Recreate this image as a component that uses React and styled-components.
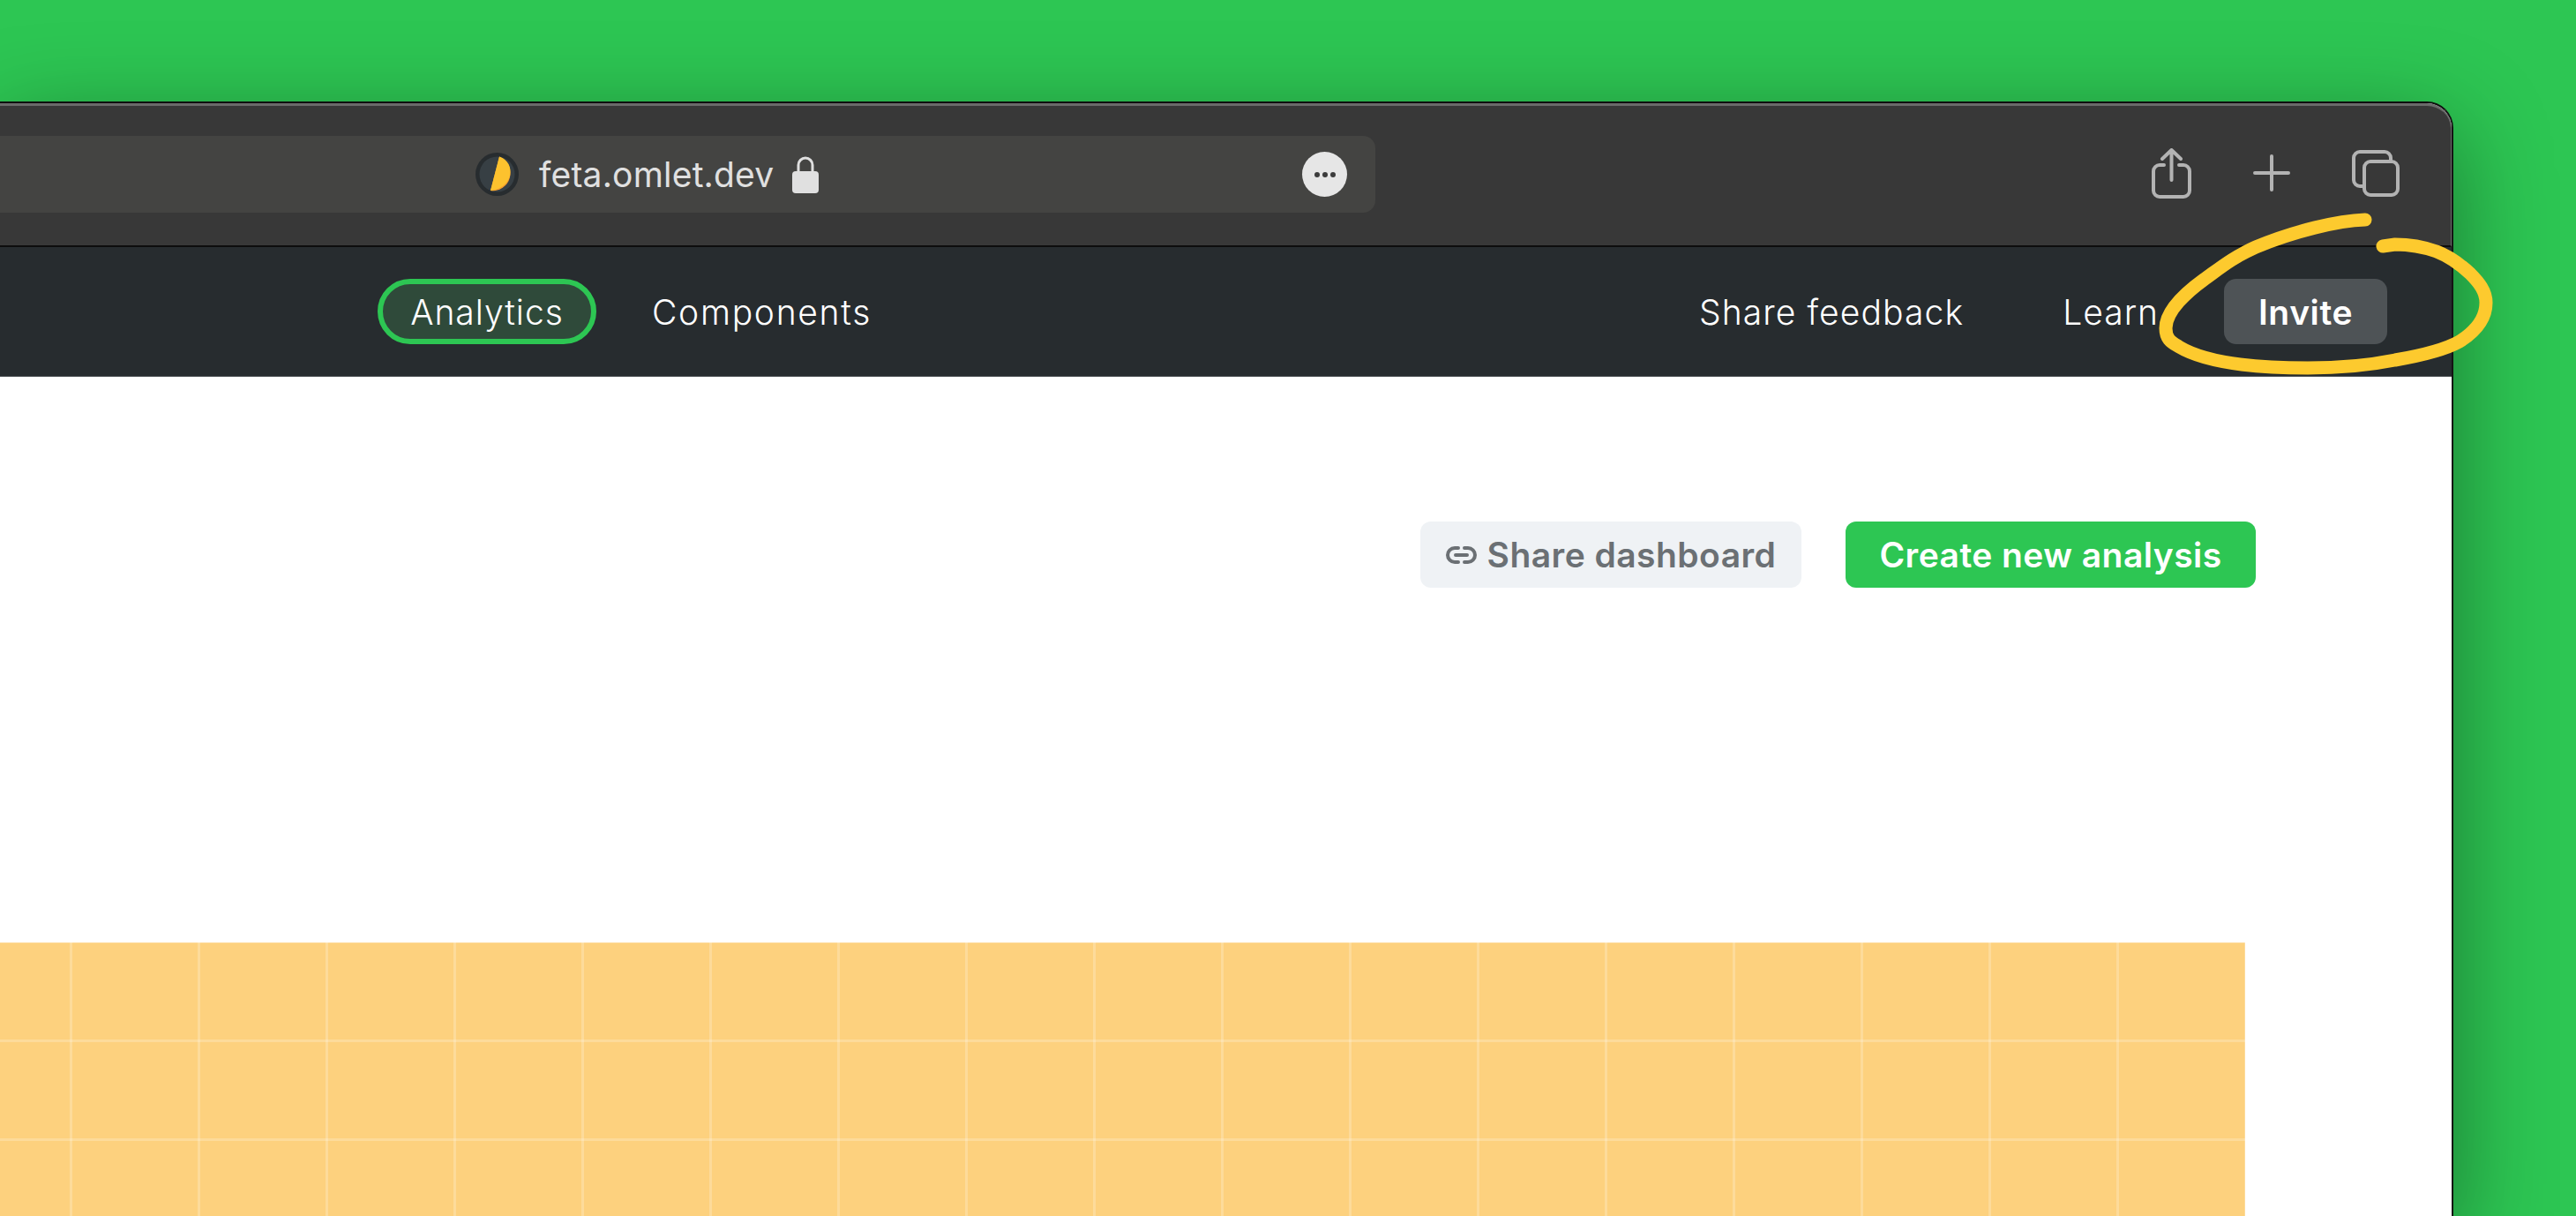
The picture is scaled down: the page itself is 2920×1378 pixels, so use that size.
import React from 'react';
import styled, { createGlobalStyle } from 'styled-components';

const GlobalStyle = createGlobalStyle`
  html, body {
    margin: 0;
    height: 100%;
    overflow: hidden;
    background: #2dc653;
    font-family: Inter, "Noto Sans", sans-serif;
  }
  #root {
    height: 100%;
  }
`;

const Page = styled.div`
  position: relative;
  box-sizing: border-box;
  height: 1378px;
  padding: 115px 139px 0 0;
  overflow: hidden;
`;

const BrowserWindow = styled.div`
  display: flex;
  flex-direction: column;
  height: 100%;
  border-top: 2px solid #0e0e0e;
  border-right: 2px solid #141414;
  border-top-right-radius: 30px;
  box-shadow: 0 30px 110px rgba(0, 0, 0, 0.4);
  background: #fff;
`;

const TitleBar = styled.div`
  box-sizing: border-box;
  display: flex;
  align-items: center;
  justify-content: space-between;
  height: 163px;
  padding: 0 58px 3px 0;
  background: #383838;
  border-top: 3px solid #6a6a6a;
  border-right: 1px solid #6a6a6a;
  border-bottom: 2px solid #0d0d0d;
  border-top-right-radius: 28px;
`;

const AddressBar = styled.div`
  box-sizing: border-box;
  display: flex;
  align-items: center;
  width: 1559px;
  height: 87px;
  padding: 0 32px 0 539px;
  background: #444442;
  border-radius: 0 14px 14px 0;
`;

const Url = styled.span`
  margin: 0 21px 0 23px;
  font-size: 39px;
  letter-spacing: 0.2px;
  color: #e0e0e0;
`;

const MoreButton = styled.span`
  display: flex;
  align-items: center;
  justify-content: center;
  gap: 3px;
  width: 51px;
  height: 51px;
  margin-left: auto;
  border-radius: 50%;
  background: #e6e6e6;
`;

const Dot = styled.i`
  width: 6px;
  height: 6px;
  border-radius: 50%;
  background: #3c3c3c;
`;

const ToolIcons = styled.div`
  display: flex;
  align-items: center;
  gap: 70px;
  margin-bottom: 3px;
`;

const ToolIcon = styled.svg`
  display: block;
  fill: none;
  stroke: #b3b3b3;
  stroke-width: 4;
  stroke-linecap: round;
  stroke-linejoin: round;
`;

const Nav = styled.nav`
  box-sizing: border-box;
  display: flex;
  align-items: center;
  height: 147px;
  padding: 0 73px 0 428px;
  background: #272c2f;
  border-bottom: 1px solid #4a4f52;
`;

const NavItem = styled.a`
  box-sizing: border-box;
  display: flex;
  align-items: center;
  font-size: 39px;
  font-weight: 300;
  letter-spacing: ${(p) => p.$track || 1}px;
  color: #fff;
  margin-left: ${(p) => (p.$push ? 'auto' : `${p.$gap || 0}px`)};
`;

const ActiveNavItem = styled(NavItem)`
  justify-content: center;
  width: 248px;
  height: 74px;
  border: 6px solid #2dc653;
  border-radius: 37px;
  background: #2f4a3a;
`;

const InviteButton = styled.button`
  width: 185px;
  height: 74px;
  margin-left: 74px;
  padding: 0;
  border: none;
  border-radius: 14px;
  background: #4e5356;
  color: #fff;
  font: 600 39px Inter, sans-serif;
  letter-spacing: 0.6px;
`;

const Main = styled.main`
  flex: 1;
  display: flex;
  flex-direction: column;
  min-height: 0;
`;

const Actions = styled.div`
  display: flex;
  justify-content: flex-end;
  gap: 50px;
  padding: 164px 222px 0 0;
`;

const ActionButton = styled.button`
  display: flex;
  align-items: center;
  justify-content: center;
  gap: 12px;
  width: ${(p) => p.$width}px;
  height: 75px;
  padding: 0;
  border: none;
  border-radius: 12px;
  background: ${(p) => (p.$primary ? '#2dc653' : '#eff2f5')};
  color: ${(p) => (p.$primary ? '#fff' : '#6b7074')};
  font: 600 39px Inter, sans-serif;
  letter-spacing: 0.45px;
`;

const LinkIcon = styled.svg`
  fill: none;
  stroke: #6b7074;
  stroke-width: 4;
  stroke-linecap: round;
`;

const Chart = styled.div`
  flex: 1;
  width: 2545px;
  margin-top: 402px;
  background-color: #fdd17e;
  background-image:
    linear-gradient(to right, rgba(255, 255, 255, 0.22) 3px, transparent 3px),
    linear-gradient(to bottom, rgba(255, 255, 255, 0.22) 3px, transparent 3px);
  background-size: 145px 112px;
  background-position: 79px 110px;
`;

const Scribble = styled.svg`
  position: absolute;
  left: 2440px;
  top: 230px;
  fill: none;
  stroke: #fdca2e;
  stroke-width: 15;
  stroke-linecap: round;
  stroke-linejoin: round;
`;

function Favicon() {
  return (
    <svg width="49" height="49" viewBox="0 0 49 49">
      <circle cx="24.5" cy="24.5" r="24.5" fill="#272c2f" />
      <circle cx="24.5" cy="24.5" r="20" fill="#373f44" />
      <path d="M27 4.6A20 20 0 0 1 17 43Z" fill="#f59f2d" />
      <path d="M27 4.6C37 8 41 17 39 26C37 35 28 42 17 43Z" fill="#fdc22e" />
    </svg>
  );
}

function LockIcon() {
  return (
    <svg width="30" height="43" viewBox="0 0 30 43">
      <path d="M7 20V11a8 8 0 0 1 16 0v9" fill="none" stroke="#e0e0e0" strokeWidth="3" />
      <rect x="0" y="18" width="30" height="25" rx="4" fill="#e0e0e0" />
    </svg>
  );
}

export default function App() {
  return (
    <Page>
      <GlobalStyle />
      <BrowserWindow>
        <TitleBar>
          <AddressBar>
            <Favicon />
            <Url>feta.omlet.dev</Url>
            <LockIcon />
            <MoreButton>
              <Dot />
              <Dot />
              <Dot />
            </MoreButton>
          </AddressBar>
          <ToolIcons>
            <ToolIcon width="45" height="57" viewBox="0 0 45 57">
              <path d="M14 19H9a7 7 0 0 0-7 7v22a7 7 0 0 0 7 7h27a7 7 0 0 0 7-7V26a7 7 0 0 0-7-7h-5" />
              <path d="M22.5 36V3M12 12l10.5-10L33 12" />
            </ToolIcon>
            <ToolIcon width="42" height="42" viewBox="0 0 42 42">
              <path d="M21 2v38M2 21h38" />
            </ToolIcon>
            <ToolIcon width="54" height="53" viewBox="0 0 54 53">
              <path d="M13 41H9a7 7 0 0 1-7-7V9a7 7 0 0 1 7-7h28a7 7 0 0 1 7 7v4" />
              <rect x="14" y="13" width="38" height="38" rx="7" />
            </ToolIcon>
          </ToolIcons>
        </TitleBar>
        <Nav>
          <ActiveNavItem>Analytics</ActiveNavItem>
          <NavItem $gap={63} $track={1.7}>Components</NavItem>
          <NavItem $push $track={1.1}>Share feedback</NavItem>
          <NavItem $gap={112}>Learn</NavItem>
          <InviteButton>Invite</InviteButton>
        </Nav>
        <Main>
          <Actions>
            <ActionButton $width={432}>
              <LinkIcon width="35" height="20" viewBox="0 0 35 20">
                <path d="M14 2H10a8 8 0 0 0 0 16h4M21 2h4a8 8 0 0 1 0 16h-4M11 10h13" />
              </LinkIcon>
              Share dashboard
            </ActionButton>
            <ActionButton $width={465} $primary>
              Create new analysis
            </ActionButton>
          </Actions>
          <Chart />
        </Main>
      </BrowserWindow>
      <Scribble width="400" height="200" viewBox="2440 230 400 200">
        <path d="M2681 249C2650 250 2600 262 2557 280C2530 292 2515 305 2498 317C2480 330 2455 352 2455 372C2455 385 2462 388 2470 393C2490 405 2530 417 2616 417C2660 417 2690 413 2715 408C2750 402 2772 396 2788 387C2807 375 2818 360 2818 343C2818 330 2810 320 2800 310C2787 298 2775 290 2762 285C2745 279 2730 277 2715 277L2701 279" />
      </Scribble>
    </Page>
  );
}
